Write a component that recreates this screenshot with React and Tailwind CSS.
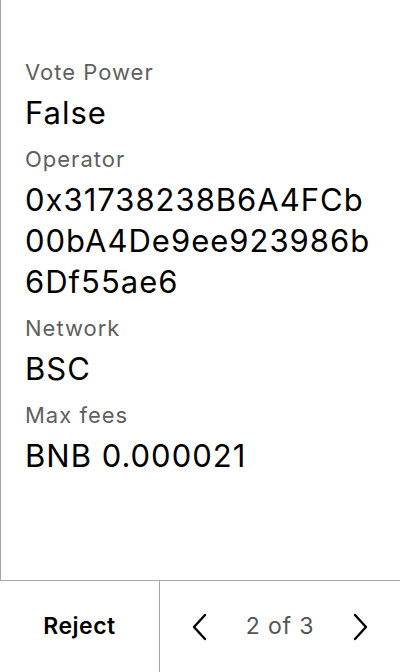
const rows = [
  { label: 'Vote Power', value: ['False'] },
  { label: 'Operator', value: ['0x31738238B6A4FCb', '00bA4De9ee923986b', '6Df55ae6'] },
  { label: 'Network', value: ['BSC'] },
  { label: 'Max fees', value: ['BNB 0.000021'] },
];

function Chevron({ dir }) {
  const points = dir === 'left' ? '13,2 2,14 13,26' : '3,2 14,14 3,26';
  return (
    <svg width="16" height="28" viewBox="0 0 16 28" fill="none">
      <polyline points={points} stroke="black" strokeWidth="2.4" strokeLinecap="round" strokeLinejoin="round" />
    </svg>
  );
}

export default function App() {
  return (
    <div
      className="w-[400px] h-[672px] bg-white flex flex-col"
      style={{ fontFamily: 'Inter, "Noto Sans", sans-serif' }}
    >
      <div className="flex-1 border-l border-[#a8a8a8] pl-[24px] pr-[10px] pt-[52px]">
        {rows.map((row) => (
          <div key={row.label} className="mb-[6px]">
            <div className="text-[22px] leading-[40px] tracking-[1px] text-[#5f5f5f]">{row.label}</div>
            {row.value.map((line) => (
              <div key={line} className="text-[31px] leading-[41px] tracking-[1px] text-black whitespace-nowrap">
                {line}
              </div>
            ))}
          </div>
        ))}
      </div>
      <div className="h-[92px] border-t border-[#a8a8a8] flex">
        <button className="w-[160px] border-r border-[#a8a8a8] flex items-center justify-center text-[23px] tracking-[0.5px] font-semibold text-black">
          Reject
        </button>
        <div className="flex-1 flex items-center justify-between pl-[32px] pr-[32px]">
          <Chevron dir="left" />
          <span className="text-[23px] tracking-[0.8px] text-[#555]">2 of 3</span>
          <Chevron dir="right" />
        </div>
      </div>
    </div>
  );
}
